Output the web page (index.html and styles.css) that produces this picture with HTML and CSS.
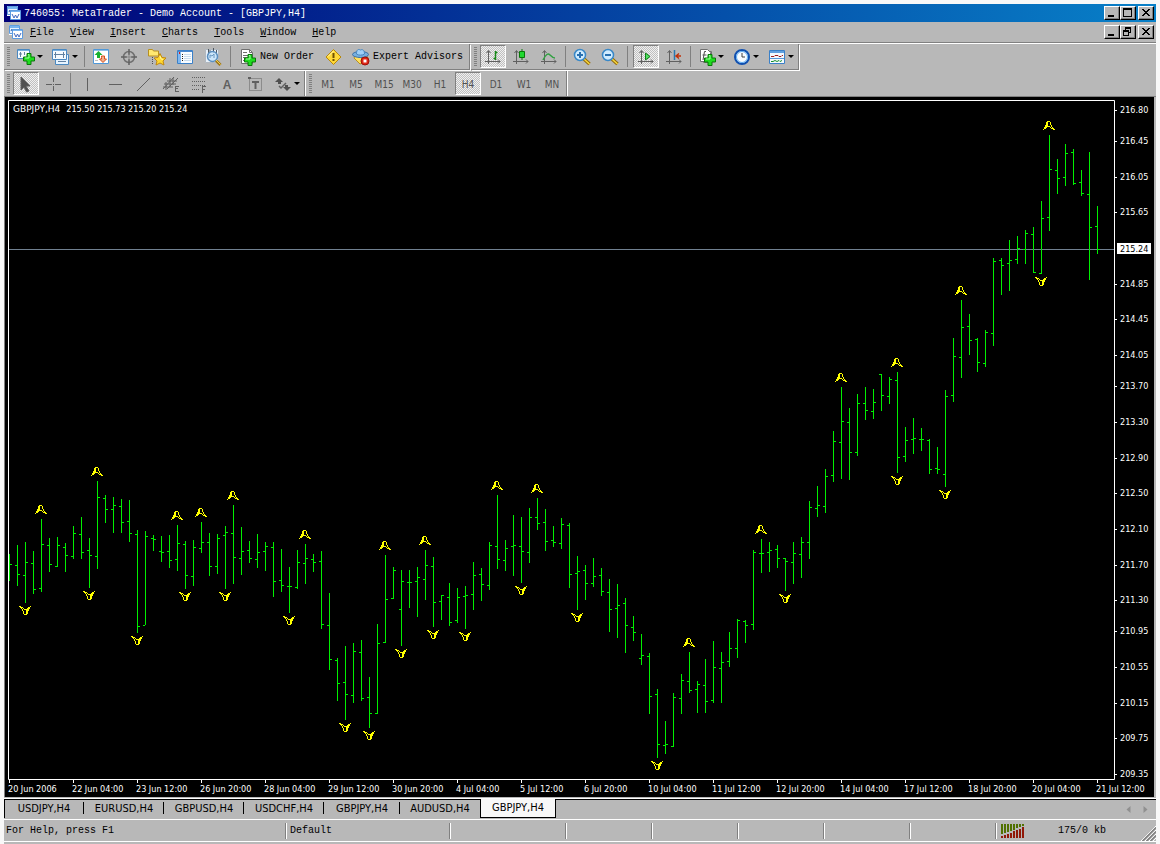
FILE: index.html
```html
<!DOCTYPE html>
<html lang="en">
<head>
<meta charset="utf-8">
<title>746055: MetaTrader - Demo Account - [GBPJPY,H4]</title>
<link rel="stylesheet" href="styles.css">
</head>
<body>
<svg class="defs" aria-hidden="true">
  <defs>
    <symbol id="app" viewBox="0 0 14 14">
      <path d="M0 0h11v10H0z" fill="#fff"/><path d="M.5.5h10v8H.5z" fill="#e8f2ff" stroke="#5c9be0"/><path d="M1 1h9v2H1z" fill="#78b4f0"/>
      <path d="M2 6l1-2 2 3 1-2" fill="none" stroke="#3060b0"/>
      <path d="M3.500 4.500h10v9h-10z" fill="#fff" stroke="#5c9be0"/><path d="M4 5h9v1H4z" fill="#78b4f0"/>
      <path d="M5 8l2 4 1.500-3 1.500 3 2-4" fill="none" stroke="#4068c0"/>
    </symbol>
    <symbol id="plus" viewBox="0 0 12 12">
      <path d="M4 .5h4V4h3.500v4H8v3.500H4V8H.5V4H4z" fill="#1fdc1f" stroke="#087808"/><path d="M5 1.500h1V5H2" fill="none" stroke="#9cff9c"/>
    </symbol>
    <symbol id="min" viewBox="0 0 12 10"><path d="M2 7h6v2H2z"/></symbol>
    <symbol id="max" viewBox="0 0 12 10"><path d="M1 0h9v9H1zM2 2v6h7V2z" fill-rule="evenodd"/></symbol>
    <symbol id="restore" viewBox="0 0 12 10"><path d="M3 0h6v6H7v3H1V3h2zM4 2v1h3v2h1V2zM2 5v3h4V5z" fill-rule="evenodd"/></symbol>
    <symbol id="close" viewBox="0 0 12 10"><path d="M2 1h2v1h1v1h2V2h1V1h2v1H9v1H8v1H7v1h1v1h1v1h1v1H8V7H7V6H5v1H4v1H2V7h1V6h1V5h1V4H4V3H3V2H2z"/></symbol>
    <symbol id="axes" viewBox="0 0 20 20"><path d="M5.500 4v13M2 14.500h15M3.500 6l2-2.500 2 2.500M15 12.500l2 2-2 2" fill="none" stroke="#606060"/></symbol>
  </defs>
</svg>

<div class="window">
  <header class="titlebar">
    <svg class="app-icon"><use href="#app"/></svg>
    <h1 class="title">746055: MetaTrader - Demo Account - [GBPJPY,H4]</h1>
    <div class="controls">
      <button class="ctl" aria-label="Minimize"><svg><use href="#min"/></svg></button>
      <button class="ctl" aria-label="Maximize"><svg><use href="#max"/></svg></button>
      <button class="ctl ctl-close" aria-label="Close"><svg><use href="#close"/></svg></button>
    </div>
  </header>

  <nav class="menubar">
    <svg class="app-icon"><use href="#app"/></svg>
    <button class="menu"><u>F</u>ile</button>
    <button class="menu"><u>V</u>iew</button>
    <button class="menu"><u>I</u>nsert</button>
    <button class="menu"><u>C</u>harts</button>
    <button class="menu"><u>T</u>ools</button>
    <button class="menu"><u>W</u>indow</button>
    <button class="menu"><u>H</u>elp</button>
    <div class="controls">
      <button class="ctl" aria-label="Minimize chart"><svg><use href="#min"/></svg></button>
      <button class="ctl" aria-label="Restore chart"><svg><use href="#restore"/></svg></button>
      <button class="ctl ctl-close" aria-label="Close chart"><svg><use href="#close"/></svg></button>
    </div>
  </nav>

  <div class="toolrow toolrow-top">
    <div class="group">
      <span class="grip"></span>
      <button class="tool drop" aria-label="New Chart"><svg class="icon" viewBox="0 0 20 20"><path d="M1.500 2.500h12v9h-12z" fill="#f4faff" stroke="#4a88c0"/><path d="M2 3h11v1H2z" fill="#78b0e0"/><path d="M4.500 5v5M3 7h3M8.500 5v3" stroke="#6080a0" fill="none"/><use href="#plus" x="7" y="6" width="12" height="12"/></svg></button>
      <button class="tool drop" aria-label="Profiles"><svg class="icon" viewBox="0 0 20 20"><path d="M4.500 7.500h13v10h-13z" fill="#e8f4ff" stroke="#4a88c0"/><path d="M1.500 2.500h14v10h-14z" fill="#f4faff" stroke="#4a88c0"/><path d="M2 3h13v1H2z" fill="#78b0e0"/><path d="M4.500 5v6M12.500 5v6M3 7.500h11M7 14.500h8" stroke="#6080a0" fill="none"/></svg></button>
      <span class="sep tight"></span>
      <button class="tool" aria-label="Market Watch"><svg class="icon" viewBox="0 0 20 20"><path d="M2.500 2.500h15v14h-15z" fill="#fff" stroke="#5098d8"/><path d="M3 3h14v1H3z" fill="#90c0e8"/><path d="M7.500 4l4 4H9v3H6V8H3.500z" fill="#18b030"/><path d="M10.500 10.500v-1.500h3v3h2l-3.500 3.500-3.500-3.500h2z" fill="#f0b090" stroke="#d85018"/><path d="M4 13h3v1H4z" fill="#c0c0c0"/></svg></button>
      <button class="tool" aria-label="Data Window"><svg class="icon" viewBox="0 0 20 20"><circle cx="10" cy="10" r="5.500" fill="none" stroke="#707070" stroke-width="1.500"/><path d="M10 2v6M10 12v6M2 10h6M12 10h6" stroke="#606060" stroke-width="1.500"/><path d="M7 10h6M10 7v6" stroke="#888"/></svg></button>
      <button class="tool" aria-label="Navigator"><svg class="icon" viewBox="0 0 20 20"><path d="M1.500 9V2.500h4l1 1.500h5v5z" fill="#ffe870" stroke="#b89020"/><path d="M5.500 10v7" stroke="#505050" stroke-dasharray="1 1"/><path d="M13 6.500l2 4 4 .5-3 3 1 4-4-2-4 2 1-4-3-3 4-.5z" fill="#ffd830" stroke="#c08810"/><path d="M13 9l1 3 2 .5" stroke="#fff8a0" fill="none"/></svg></button>
      <button class="tool" aria-label="Terminal"><svg class="icon" viewBox="0 0 20 20"><path d="M2.500 3.500h15v13h-15z" fill="#f8fcff" stroke="#3a80c8"/><path d="M3 4h3v12H3z" fill="#80b8f0"/><path d="M3 4h14v1H3z" fill="#4888d0"/><path d="M4 5h1v2H4z" fill="#d02020"/><path d="M7 7.500h1M7 9.500h1M7 11.500h1M7 13.500h1" stroke="#202020"/><path d="M9 7.500h7M9 9.500h7M9 11.500h7M9 13.500h7" stroke="#c8dced"/></svg></button>
      <button class="tool" aria-label="Strategy Tester"><svg class="icon" viewBox="0 0 20 20"><path d="M2.500 2.500h13v13h-13z" fill="#e8f0f8" stroke="#b0b8c0"/><path d="M5.500 2v6M5 4h3M10.500 1v5M13.500 3v5" stroke="#505860" fill="none"/><circle cx="9.500" cy="9.500" r="5" fill="#c8e4fa" fill-opacity=".85" stroke="#5c90c0" stroke-width="1.500"/><path d="M7 11v-3l2 1 2-2v4" stroke="#6898c0" fill="none"/><path d="M13 13.500l4.500 4.500" stroke="#a07818" stroke-width="3"/><path d="M13 13l4.500 4.500" stroke="#f0d050"/></svg></button>
      <span class="sep"></span>
      <button class="tool text"><svg class="icon" viewBox="0 0 20 20"><path d="M3.500 2.500h8l3 3v11h-11z" fill="#fff" stroke="#707070"/><path d="M11.500 2.500v3h3" fill="none" stroke="#707070"/><path d="M5 5.500h4M5 8.500h8M5 10.500h5M5 13.500h3" stroke="#707070"/><use href="#plus" x="6" y="7" width="12" height="12"/></svg><span>New Order</span></button>
      <button class="tool" aria-label="MetaEditor"><svg class="icon" viewBox="0 0 20 20"><path d="M9.500 2.500l7.500 7.500-7.500 7.500L2 10z" fill="#ffd838" stroke="#b88808"/><path d="M9.500 4L4 9.500" stroke="#fff8b0"/><path d="M8.500 6h2v5h-2zM8.500 12h2v2h-2z" fill="#705000"/></svg></button>
      <button class="tool text"><svg class="icon" viewBox="0 0 20 20"><path d="M4 9l-1 2 6 6 6-2 2-5z" fill="#ffe060" stroke="#b89020"/><ellipse cx="9.500" cy="7.500" rx="8" ry="3" fill="#78b0e0" stroke="#3870a8"/><path d="M5.500 7c0-5 2-5 4-4 2-1 4 0 4 4-2 1.500-6 1.500-8 0z" fill="#a0d0f8" stroke="#4888c0"/><circle cx="14" cy="14" r="4" fill="#e02818" stroke="#a01008"/><path d="M12.500 12.500h3v3h-3z" fill="#fff"/></svg><span>Expert Advisors</span></button>
    </div>
    <div class="group">
      <span class="grip"></span>
      <button class="tool pressed" aria-label="Bar Chart"><svg class="icon" viewBox="0 0 20 20"><use href="#axes"/><path d="M12.500 4v9M10.500 11.500h2M12.500 5.500h2" stroke="#188818" fill="none" stroke-width="1.500"/></svg></button>
      <button class="tool" aria-label="Candlesticks"><svg class="icon" viewBox="0 0 20 20"><use href="#axes"/><path d="M11 2v11" stroke="#087808"/><path d="M8.500 4.500h5v6h-5z" fill="#20d830" stroke="#087808"/></svg></button>
      <button class="tool" aria-label="Line Chart"><svg class="icon" viewBox="0 0 20 20"><use href="#axes"/><path d="M4 13c3-6 5-7 7-5s3 3 5 3" stroke="#30a040" fill="none" stroke-width="1.500"/></svg></button>
      <span class="sep tight"></span>
      <button class="tool" aria-label="Zoom In"><svg class="icon" viewBox="0 0 20 20"><path d="M12 12l5.500 5" stroke="#906808" stroke-width="3.500"/><path d="M12 12l5.500 5" stroke="#f8d840" stroke-width="1.500"/><circle cx="8" cy="8" r="5.500" fill="#d0ecff" stroke="#3888c8" stroke-width="1.500"/><path d="M8 5v6M5 8h6" stroke="#2870b0" stroke-width="2"/></svg></button>
      <button class="tool" aria-label="Zoom Out"><svg class="icon" viewBox="0 0 20 20"><path d="M12 12l5.500 5" stroke="#906808" stroke-width="3.500"/><path d="M12 12l5.500 5" stroke="#f8d840" stroke-width="1.500"/><circle cx="8" cy="8" r="5.500" fill="#d0ecff" stroke="#3888c8" stroke-width="1.500"/><path d="M5 8h6" stroke="#2870b0" stroke-width="2"/></svg></button>
      <span class="sep"></span>
      <button class="tool pressed" aria-label="Auto Scroll"><svg class="icon" viewBox="0 0 20 20"><use href="#axes"/><path d="M9.500 6l4.500 3.500-4.500 3.500z" fill="#50e060" stroke="#108018"/></svg></button>
      <button class="tool" aria-label="Chart Shift"><svg class="icon" viewBox="0 0 20 20"><use href="#axes"/><path d="M10.500 3v10" stroke="#2878b0" stroke-width="1.500"/><path d="M12 9h5M15 6.500L12 9l3 2.500" stroke="#c03008" fill="none" stroke-width="1.500"/></svg></button>
      <span class="sep tight"></span>
      <button class="tool drop" aria-label="Indicators"><svg class="icon" viewBox="0 0 20 20"><path d="M6.500 4.500h8v11h-8z" fill="#fff" stroke="#707070"/><path d="M3.500 2.500h7l3 3v9h-10z" fill="#fff" stroke="#707070"/><path d="M9 4.500H7.500L6 13M5.500 8h4" stroke="#505050" fill="none"/><use href="#plus" x="7" y="7" width="12" height="12"/></svg></button>
      <button class="tool drop" aria-label="Periodicity"><svg class="icon" viewBox="0 0 20 20"><circle cx="10" cy="10" r="7" fill="#fff" stroke="#1050b0" stroke-width="2"/><circle cx="10" cy="10" r="5.500" fill="#f8fcff" stroke="#58a8f0"/><path d="M10 6v4h3" stroke="#404040" fill="none"/></svg></button>
      <button class="tool drop" aria-label="Templates"><svg class="icon" viewBox="0 0 20 20"><path d="M2.500 3.500h15v13h-15z" fill="#f4faff" stroke="#3a80c8"/><path d="M3 4h14v2H3z" fill="#60a0e0"/><path d="M3 11.500h14" stroke="#5898d8"/><path d="M4 9.500h3l1-1h3l1 1h2l1-1h1" stroke="#a02020" fill="none"/><path d="M4 14.500h2l2-1 2 1 2-1 1 1 2-1" stroke="#189028" fill="none"/></svg></button>
    </div>
  </div>

  <div class="toolrow">
    <div class="group">
      <span class="grip"></span>
      <button class="tool pressed" aria-label="Cursor"><svg class="icon line" viewBox="0 0 20 20"><path d="M5 3l9 9h-4l3 5-2.500 1L8 13l-3 3z" fill="#505050"/></svg></button>
      <button class="tool" aria-label="Crosshair"><svg class="icon line" viewBox="0 0 20 20"><path d="M9.500 3v5M9.500 12v5M2 10.500h6M11 10.500h6M9 10.500h1"/></svg></button>
      <span class="sep tight"></span>
      <button class="tool" aria-label="Vertical Line"><svg class="icon line" viewBox="0 0 20 20"><path d="M10.500 4v13"/></svg></button>
      <button class="tool" aria-label="Horizontal Line"><svg class="icon line" viewBox="0 0 20 20"><path d="M4 10.500h13"/></svg></button>
      <button class="tool" aria-label="Trendline"><svg class="icon line" viewBox="0 0 20 20"><path d="M4 17L17 4"/></svg></button>
      <button class="tool" aria-label="Equidistant Channel"><svg class="icon line" viewBox="0 0 20 20"><path d="M2 15L13 3M6 15L17 4M3 10h12M6 7h10M2 13h10M5 8v8M9 4v9M12 4v7M14 12.500h4M14.500 12v6M14 14.500h3M14 17.500h4"/></svg></button>
      <button class="tool" aria-label="Fibonacci Retracement"><svg class="icon line" viewBox="0 0 20 20"><path d="M3 3.500h14M3 7.500h14M3 11.500h14M3 15.500h8" stroke-dasharray="1 1"/><path d="M13.500 12v7M13 12.500h4M13 15.500h3"/></svg></button>
      <button class="tool letter" aria-label="Text">A</button>
      <button class="tool" aria-label="Text Label"><svg class="icon line" viewBox="0 0 20 20"><path d="M4.500 4.500h12v12h-12z" fill="none" stroke-dasharray="1 1"/><path d="M3 3h3v2H3zM7 7h7v2h-2.500v6h-2V9H7z" fill="#606060" stroke="none"/></svg></button>
      <button class="tool drop" aria-label="Arrows"><svg class="icon line" viewBox="0 0 20 20"><path d="M6 4l4 4H8v2H5V8H2zM14 17l-4-4h2v-2h3v2h3z" fill="#505050" stroke="none"/><path d="M6 12l2 2 5-5" stroke-width="1.500" fill="none"/></svg></button>
    </div>
    <div class="group">
      <span class="grip"></span>
      <button class="tool period">M1</button>
      <button class="tool period">M5</button>
      <button class="tool period">M15</button>
      <button class="tool period">M30</button>
      <button class="tool period">H1</button>
      <button class="tool period pressed">H4</button>
      <button class="tool period">D1</button>
      <button class="tool period">W1</button>
      <button class="tool period">MN</button>
    </div>
  </div>

  <main class="chart">
    <svg class="plot" id="plot" role="img" aria-label="GBPJPY H4 bar chart"></svg>
    <p class="quote"><span class="symbol">GBPJPY,H4</span><span>215.50 215.73 215.20 215.24</span></p>
  </main>

  <div class="tabs">
    <button class="tab">USDJPY,H4</button>
    <button class="tab">EURUSD,H4</button>
    <button class="tab">GBPUSD,H4</button>
    <button class="tab">USDCHF,H4</button>
    <button class="tab short">GBPJPY,H4</button>
    <button class="tab last">AUDUSD,H4</button>
    <button class="tab short current">GBPJPY,H4</button>
    <div class="scrollers">
      <button class="scroller" aria-label="Scroll tabs left"><svg viewBox="0 0 4 7"><path d="M4 0v7L0 3.500z"/></svg></button>
      <button class="scroller" aria-label="Scroll tabs right"><svg viewBox="0 0 4 7"><path d="M0 0v7l4-3.500z"/></svg></button>
    </div>
  </div>

  <footer class="status">
    <span class="cell help">For Help, press F1</span>
    <span class="cell profile">Default</span>
    <span class="cell wide"></span>
    <span class="cell"></span>
    <span class="cell"></span>
    <span class="cell"></span>
    <span class="cell"></span>
    <span class="cell"></span>
    <span class="cell traffic"><svg class="signal" viewBox="0 0 24 14"><path d="M1 0h2v10H1zM4 0h2v9H4zM7 0h2v8H7zM10 0h2v7h-2zM13 0h2v6h-2zM16 0h2v4h-2zM19 0h2v3h-2zM22 0h2v2h-2z" fill="#507000"/><path d="M1 12h2v2H1zM4 11h2v3H4zM7 10h2v4H7zM10 9h2v5h-2zM13 7h2v7h-2zM16 6h2v8h-2zM19 5h2v9h-2zM22 3h2v11h-2z" fill="#901808"/></svg><span class="rate">175/0 kb</span></span>
    <svg class="resize" viewBox="0 0 15 16"><path d="M0 16L15 1M4 16L15 5M8 16l7-7M12 16l3-3" stroke="#fff" fill="none"/><path d="M1.500 16L15 2.500M5.500 16L15 6.500M9.500 16l5.500-5.500" stroke="#808080" stroke-width="1.500" fill="none"/></svg>
  </footer>
</div>
<script src="chart.js"></script>
</body>
</html>
```

FILE: styles.css
```css
* { box-sizing: border-box; }

:root {
  --face: #b8b8b8;
  --shade: #808080;
  --mono: "Liberation Mono", monospace;
  --ui: "DejaVu Sans Condensed", "DejaVu Sans", sans-serif;
}

body {
  margin: 0;
  padding: 4px 4px 0;
  min-height: 100vh;
  display: flex;
  background: #f8f8f8;
  font: 10px/12px var(--mono);
  color: #000;
}

button {
  margin: 0;
  padding: 0;
  border: 0;
  background: none;
  font: inherit;
  color: inherit;
}

svg { display: block; }
.defs { position: absolute; width: 0; height: 0; }

.window {
  flex: 1;
  min-width: 0;
  display: flex;
  flex-direction: column;
  background: var(--face);
}

/* Title and menu bars */
.titlebar {
  height: 18px;
  display: flex;
  align-items: center;
  padding: 0 2px 0 3px;
  background: linear-gradient(90deg, #000078, #0880c8);
  color: #fff;
}
.app-icon { width: 14px; height: 14px; }
.title { margin: 0 0 0 3px; padding-top: 2px; font: inherit; white-space: nowrap; }
.controls { display: flex; margin-left: auto; }
.ctl {
  width: 16px;
  height: 14px;
  padding: 1px;
  background: var(--face);
  border: 1px solid;
  border-color: #fff #000 #000 #fff;
  box-shadow: inset -1px -1px var(--shade);
}
.ctl svg { width: 12px; height: 10px; }
.ctl-close { margin-left: 2px; }

.menubar {
  height: 21px;
  display: flex;
  align-items: center;
  padding: 0 2px 0 5px;
  border-bottom: 1px solid var(--shade);
}
.menubar .app-icon { margin-right: 7px; }
.menu { margin-right: 16px; padding-top: 2px; }

/* Toolbars */
.toolrow {
  height: 26px;
  display: flex;
  border-bottom: 1px solid var(--shade);
}
.toolrow-top {
  height: 28px;
  border-top: 1px solid #fff;
  border-bottom: 0;
}
.group {
  display: flex;
  align-items: center;
  margin-right: 1px;
  border-right: 1px solid var(--shade);
  box-shadow: 1px 0 #fff;
}
.toolrow-top .group {
  margin-bottom: 1px;
  border-bottom: 1px solid var(--shade);
  box-shadow: 1px 1px #fff;
}
.grip {
  width: 3px;
  height: 20px;
  margin: 0 2px 0 3px;
  background: repeating-linear-gradient(var(--shade) 0 1px, var(--face) 1px 2px);
}
.sep { width: 2px; height: 21px; margin: 0 3px; border-left: 1px solid var(--shade); }
.sep.tight { margin: 0 1px 0 2px; }
.tool {
  width: 28px;
  height: 23px;
  display: flex;
  align-items: center;
  justify-content: center;
}
.icon { width: 20px; height: 20px; flex: none; }
.line { stroke: #606060; stroke-width: 1px; fill: none; }
.drop { width: 35px; gap: 1px; }
.drop::after {
  content: "";
  border: solid transparent;
  border-width: 3px 3px 0;
  border-top-color: #000;
}
.text { width: auto; gap: 2px; padding: 0 6px 0 3px; white-space: nowrap; }
.pressed {
  width: 26px;
  margin: 0 1px;
  border: 1px solid;
  border-color: var(--shade) #fff #fff var(--shade);
  background: repeating-conic-gradient(#f0f0f0 0 25%, #c0c0c0 0 50%) 0 0 / 2px 2px;
}
.letter { padding-top: 2px; font: bold 12px/14px "Liberation Sans", sans-serif; color: #606060; }
.period { padding-top: 2px; font: 10px/12px var(--ui); color: #505050; }

/* Chart */
.chart {
  position: relative;
  flex: 1;
  min-height: 200px;
  margin-right: 2px;
  border-left: 1px solid var(--shade);
  background: #000;
}
.plot {
  position: absolute;
  width: 100%;
  height: 100%;
  font: 9px var(--ui);
  fill: #fff;
}
.quote {
  position: relative;
  display: flex;
  align-items: baseline;
  gap: 6px;
  margin: 0;
  padding: 6px 8px;
  font: 9px/12px var(--ui);
  color: #fff;
}
.symbol { font-family: "DejaVu Sans", sans-serif; }
.frame { fill: none; stroke: #fff; }
.level { stroke: #708090; }
.bars { fill: none; stroke: #00f000; }
.fractals { fill: none; stroke: #ff0; }
.price-now { fill: #000; }

/* Chart tabs */
.tabs {
  height: 22px;
  display: flex;
  margin-top: 1px;
  border-top: 1px solid #fff;
  border-bottom: 1px solid #fff;
  box-shadow: inset 0 1px #000;
}
.tab {
  width: 80px;
  height: 19px;
  font: 11px/18px var(--ui);
  background: linear-gradient(#000, #000) 100% 3px / 1px 12px no-repeat;
}
.tab.short { width: 76px; }
.tab:first-child { box-shadow: inset 1px 0 #000; }
.tab.last { background: none; }
.tab.current {
  background: #f8f8f8;
  border: 1px solid #000;
  border-top: 0;
}
.scrollers { display: flex; gap: 12px; margin: 0 8px 0 auto; }
.scroller svg { width: 5px; height: 7px; fill: #909090; }

/* Status bar */
.status {
  height: 22px;
  display: flex;
  align-items: center;
  border-bottom: 1px solid #fff;
  margin-bottom: 2px;
}
.cell {
  width: 86px;
  height: 16px;
  flex: none;
  padding-left: 4px;
  line-height: 16px;
  border-left: 1px solid var(--shade);
  box-shadow: inset 1px 0 #fff;
  white-space: nowrap;
}
.cell.help {
  flex: 1;
  min-width: 120px;
  padding-left: 2px;
  border: 0;
  box-shadow: none;
}
.cell.profile { width: 164px; }
.cell.wide { width: 116px; }
.cell.traffic { width: 146px; display: flex; align-items: center; }
.signal { width: 24px; height: 14px; }
.rate { margin-left: 34px; }
.resize { width: 15px; height: 16px; align-self: flex-end; }
```

FILE: chart.js
```js
// Each bar: high, low, open, close as pixel rows; ORIGIN is the row of the chart panel's top edge.
const ORIGIN = 97;
const STEP = 8;
const bars = [
  [554,581,564,564],[545,586,565,574],[542,603,575,562],[551,594,563,589],[519,592,588,544],
  [538,572,545,564],[537,567,566,545],[543,572,547,555],[526,559,556,533],[517,559,534,552],
  [538,588,550,555],[481,569,556,497],[495,523,498,509],[497,533,509,505],[499,533,506,522],
  [500,542,521,533],[530,633,534,626],[531,625,625,536],[535,551,538,539],[536,562,551,552],
  [535,568,551,560],[525,571,559,543],[541,589,544,575],[540,586,576,547],[522,553,548,542],
  [533,576,542,566],[534,574,566,538],[526,589,535,532],[505,584,533,557],[527,575,558,551],
  [541,563,550,558],[534,568,559,552],[542,571,551,546],[542,597,547,581],[549,592,580,585],
  [567,613,586,586],[550,589,587,562],[544,584,563,558],[554,572,559,562],[551,629,561,624],
  [593,670,625,659],[658,701,660,683],[646,720,682,694],[643,703,695,651],[640,701,652,698],
  [677,728,697,713],[624,714,713,643],[555,643,642,599],[567,599,598,570],[570,646,609,581],
  [570,608,582,582],[567,617,581,577],[550,600,579,565],[557,627,566,602],[595,620,601,595],
  [583,626,597,622],[588,623,620,597],[586,629,596,595],[562,610,594,575],[568,601,574,584],
  [542,590,585,545],[495,569,546,559],[540,571,560,548],[515,576,546,545],[517,583,546,551],
  [508,563,552,517],[498,530,517,523],[509,551,522,541],[526,547,540,542],[518,549,543,524],
  [523,588,525,574],[556,610,573,571],[565,600,570,583],[558,587,583,576],[568,596,575,591],
  [579,632,592,609],[584,638,608,605],[598,653,603,625],[616,641,627,632],[634,665,658,655],
  [653,714,656,696],[689,758,694,744],[721,754,745,744],[693,747,746,697],[674,714,698,680],
  [652,693,681,690],[681,713,689,684],[659,713,685,701],[641,703,700,667],[652,703,668,662],
  [632,667,661,648],[619,658,648,620],[620,643,621,625],[550,630,624,552],[539,573,553,553],
  [542,572,552,550],[545,568,549,558],[558,591,558,561],[542,584,562,553],[537,578,554,542],
  [501,559,542,507],[486,517,508,505],[469,513,506,476],[431,482,475,441],[387,479,442,421],
  [408,480,422,452],[394,456,452,403],[387,420,403,410],[389,419,411,402],[374,411,374,395],
  [377,404,396,379],[372,473,380,457],[427,462,456,440],[418,454,439,438],[428,451,439,439],
  [439,474,440,469],[447,474,468,469],[390,487,474,396],[338,402,395,356],[300,378,357,327],
  [314,355,326,340],[338,372,339,362],[330,367,363,332],[258,346,333,261],[258,295,260,265],
  [240,291,263,260],[236,264,259,248],[230,264,249,233],[227,273,234,272],[201,274,273,218],
  [135,231,217,169],[159,194,170,178],[144,186,177,153],[149,185,152,183],[170,196,182,193],
  [152,280,194,227],[206,254,226,249]
];

// Bar indexes that carry a fractal above or below.
const up = [4,11,21,24,28,37,47,52,61,66,85,94,104,111,119,130];
const down = [2,10,16,22,27,35,42,45,49,53,57,64,71,81,97,111,117,129];

// Fractal arrow as horizontal runs, one row per line; turned by half a circle for a low.
const ARROW = [
  "M-2 .5h3", "M-3 1.500h2M1 1.500h1", "M-3 2.500h2M1 2.500h1", "M-3 3.500h2M1 3.500h1",
  "M-4 4.500h3M2 4.500h1", "M-4 5.500h5M2 5.500h1", "M-5 6.500h3M1 6.500h1M3 6.500h1",
  "M-5 7.500h2M2 7.500h3", "M-6 8.500h1M4 8.500h2"
].join("");

const dates = ["20 Jun 2006","22 Jun 04:00","23 Jun 12:00","26 Jun 20:00","28 Jun 04:00",
  "29 Jun 12:00","30 Jun 20:00","4 Jul 04:00","5 Jul 12:00","6 Jul 20:00","10 Jul 04:00",
  "11 Jul 12:00","12 Jul 20:00","14 Jul 04:00","17 Jul 12:00","18 Jul 20:00","20 Jul 04:00","21 Jul 12:00"];
const prices = [216.80,216.45,216.05,215.65,214.85,214.45,214.05,213.70,213.30,212.90,212.50,
  212.10,211.70,211.30,210.95,210.55,210.15,209.75,209.35];

const plot = document.getElementById("plot");

function barX(i) { return 4 + i * STEP; }

function draw() {
  const right = plot.clientWidth - 40;
  const bottom = plot.clientHeight - 18;
  let path = "";
  bars.forEach(([high, low, open, close], i) => {
    const x = barX(i);
    path += `M${x + .5} ${high - ORIGIN}V${low - ORIGIN}`;
    if (i > 0) path += `M${x - 2} ${open - ORIGIN + .5}h2`;
    path += `M${x} ${close - ORIGIN + .5}h3`;
  });
  const marks = up.map(i => `<path transform="translate(${barX(i)} ${bars[i][0] - ORIGIN - 14})" d="${ARROW}"/>`)
    .concat(down.map(i => `<path transform="translate(${barX(i)} ${bars[i][1] - ORIGIN + 12}) rotate(180)" d="${ARROW}"/>`)).join("");
  let axis = "";
  let labels = "";
  prices.forEach(p => {
    const y = Math.round(13 + (216.80 - p) * 89.13);
    axis += `M${right} ${y + .5}h3`;
    labels += `<text x="${right + 6}" y="${y + 3}">${p.toFixed(2)}</text>`;
  });
  dates.forEach((d, k) => {
    const x = barX(k * 8);
    axis += `M${x + .5} ${bottom}v4`;
    labels += `<text x="${x - 1}" y="${bottom + 13}">${d}</text>`;
  });
  const now = 152.5;
  plot.innerHTML =
    `<path class="level" d="M4 ${now}H${right}"/>` +
    `<path class="bars" d="${path}"/><g class="fractals">${marks}</g>` +
    `<path class="frame" d="M3.500 3.500H${right + .5}V${bottom + .5}H3.500z${axis}"/>` + labels +
    `<rect x="${right + 3}" y="146" width="34" height="11"/>` +
    `<text class="price-now" x="${right + 6}" y="155">215.24</text>`;
}

draw();
window.addEventListener("resize", draw);
```
